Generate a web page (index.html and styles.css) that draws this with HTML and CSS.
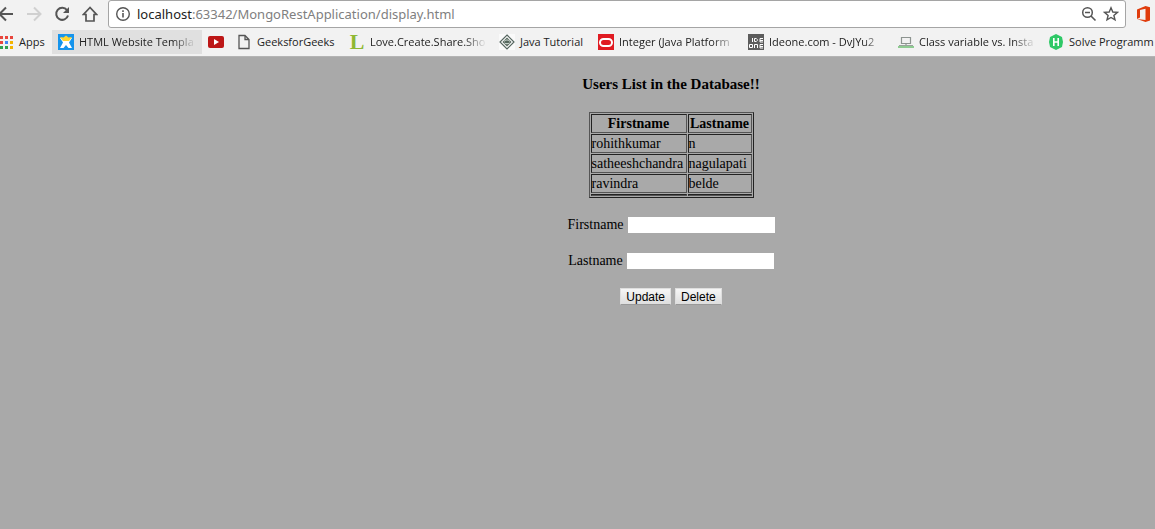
FILE: index.html
```html
<!DOCTYPE html>
<html lang="en">
<head>
<meta charset="utf-8">
<title>Users List</title>
<link rel="stylesheet" href="styles.css">
</head>
<body>
<header class="browser">
  <div class="toolbar">
    <nav class="nav" aria-label="Navigation">
      <button class="tool" aria-label="Back"><svg width="16" height="16" viewBox="0 0 16 16"><path d="M15 8H2M8 1.500L1.500 8l6.500 6.500" fill="none" stroke="#555" stroke-width="2"/></svg></button>
      <button class="tool" aria-label="Forward"><svg width="16" height="16" viewBox="0 0 16 16"><path d="M1 8h13M8 1.500L14.500 8 8 14.500" fill="none" stroke="#d0d0d0" stroke-width="2"/></svg></button>
      <button class="tool" aria-label="Reload"><svg width="16" height="16" viewBox="0 0 16 16"><path d="M13 4.200A6 6 0 1 0 14 9.500" fill="none" stroke="#555" stroke-width="2"/><path d="M15 1v6H9z" fill="#555"/></svg></button>
      <button class="tool" aria-label="Home"><svg width="16" height="16" viewBox="0 0 16 16"><path d="M8 1.500L1.500 8.500H4V15h8V8.500h2.500z" fill="none" stroke="#555" stroke-width="1.700"/></svg></button>
    </nav>
    <div class="address">
      <svg width="16" height="16" viewBox="0 0 16 16"><circle cx="8" cy="8" r="6.300" fill="none" stroke="#555" stroke-width="1.400"/><path d="M8 7v4.500M8 4.300v1.600" stroke="#555" stroke-width="1.600"/></svg>
      <div class="url"><span class="host">localhost</span>:63342/MongoRestApplication/display.html</div>
      <svg width="16" height="16" viewBox="0 0 16 16"><circle cx="6.500" cy="6.500" r="4.800" fill="none" stroke="#555" stroke-width="1.500"/><path d="M4 6.500h5M10 10l4.500 4.500" fill="none" stroke="#555" stroke-width="1.600"/></svg>
      <svg width="16" height="16" viewBox="0 0 16 16"><path d="M8 1.800l1.800 4.200 4.600.400-3.500 3 1.100 4.500L8 11.500l-4 2.400 1.100-4.500-3.500-3L6.200 6z" fill="none" stroke="#555" stroke-width="1.400"/></svg>
    </div>
    <svg class="office" width="16" height="18" viewBox="0 0 16 18"><path d="M1 4.500L9.500 1 14 2.300v13.200L9.500 17 1 14l8.500 1V3.700L4 5v7.500L1 14z" fill="#e03c0c"/></svg>
  </div>
  <nav class="bookmarks" aria-label="Bookmarks">
    <a class="mark apps" href="#"><svg width="14" height="14" viewBox="0 0 14 14"><path d="M1 1h3v3H1zM6 1h3v3H6zM11 1h3v3h-3zM1 6h3v3H1z" fill="#e8453c"/><path d="M6 6h3v3H6z" fill="#4285f4"/><path d="M11 6h3v3h-3zM11 11h3v3h-3z" fill="#f4b400"/><path d="M1 11h3v3H1zM6 11h3v3H6z" fill="#30a050"/></svg><span>Apps</span></a>
    <a class="mark wide active" href="#"><svg width="16" height="16" viewBox="0 0 16 16"><path fill="#1594ec" d="M0 0h16v16H0z"/><path d="M2 4h3l3 2 3-2h3l-3 4.500 3 5.500h-3.500L8 11l-2.500 3H2l3-5.500z" fill="#fff"/><path d="M2 3l3.500.500L8 1.500l2.500 2L14 3l-3 4H5z" fill="#ffd52e"/></svg><span class="fade">HTML Website Templa</span></a>
    <a class="mark video" href="#" aria-label="Video"><svg width="16" height="16" viewBox="0 0 16 16"><rect y="2" width="16" height="12" rx="2" fill="#bd1717"/><path d="M6 5l5 3-5 3z" fill="#fff"/></svg></a>
    <a class="mark geeks" href="#"><svg width="16" height="16" viewBox="0 0 16 16"><path d="M3 1.500h6l4 4v9H3zM9 1.500v4h4" fill="none" stroke="#555" stroke-width="1.300"/></svg><span>GeeksforGeeks</span></a>
    <a class="mark wide" href="#"><b class="letter">L</b><span class="fade">Love.Create.Share.Sho</span></a>
    <a class="mark java" href="#"><svg width="16" height="16" viewBox="0 0 16 16"><path fill="#fafafa" d="M0 0h16v16H0z"/><path d="M8 1l7 7-7 7-7-7z" fill="none" stroke="#566660" stroke-width="1.200"/><path d="M8 3.500L12.500 8 8 12.500 3.500 8z" fill="#55665c"/><path d="M5 7.500c2-2 4-2 6 0M5.500 9c2 1 3 1 5 0" fill="none" stroke="#d9e3dd"/></svg><span>Java Tutorial</span></a>
    <a class="mark wide" href="#"><svg width="16" height="16" viewBox="0 0 16 16"><path fill="#e01b22" d="M0 0h16v16H0z"/><rect x="2" y="5" width="12" height="7" rx="3.500" fill="none" stroke="#fff" stroke-width="2"/></svg><span class="fade">Integer (Java Platform</span></a>
    <a class="mark wide" href="#"><svg width="16" height="16" viewBox="0 0 16 16"><path fill="#5c5c5c" d="M0 0h16v16H0z"/><path d="M4.500 4v4M6.500 4.500v3h1.800l1-1V5.500l-1-1zM15 4.500h-3v3.500h3M12 6.500h3M1.500 10.500h3v3h-3zM6.500 14v-3.500h3V14M15 10.500h-3v3.500h3M12 12.500h3" fill="none" stroke="#fff" stroke-width="1"/></svg><span class="fade">Ideone.com - DvJYu2</span></a>
    <a class="mark wide" href="#"><svg width="16" height="16" viewBox="0 0 16 16"><path d="M3.500 3.500h9v6h-9zM8 9.500v2" fill="none" stroke="#8d9490" stroke-width="1.200"/><path d="M1 11.500h14" stroke="#9aa39d"/><path d="M0 13h16" stroke="#6cbe70" stroke-width="1.500"/></svg><span class="fade">Class variable vs. Insta</span></a>
    <a class="mark wide" href="#"><svg width="16" height="16" viewBox="0 0 16 16"><path d="M8 0l6 3 1 5-1 5-6 3-6-3-1-5 1-5z" fill="#2ec866"/><path d="M5.800 4v8M10.200 4v8M6 8h4" stroke="#fff" stroke-width="1.600"/></svg><span>Solve Programm</span></a>
  </nav>
</header>
<main class="page">
  <h1 class="title">Users List in the Database!!</h1>
  <table class="users">
    <thead><tr><th class="first">Firstname</th><th class="last">Lastname</th></tr></thead>
    <tbody>
      <tr><td>rohithkumar</td><td>n</td></tr>
      <tr><td>satheeshchandra</td><td>nagulapati</td></tr>
      <tr><td>ravindra</td><td>belde</td></tr>
      <tr><td></td><td></td></tr>
    </tbody>
  </table>
  <form class="form">
    <div class="field"><label for="firstname">Firstname</label><input id="firstname" type="text"></div>
    <div class="field"><label for="lastname">Lastname</label><input id="lastname" type="text"></div>
    <div class="actions"><button class="action" type="button">Update</button><button class="action" type="button">Delete</button></div>
  </form>
</main>
</body>
</html>
```

FILE: styles.css
```css
* { box-sizing: border-box; }
body {
  margin: 0;
  min-height: 100vh;
  background: #a9a9a9;
  color: #000;
  overflow-x: hidden;
}
.browser {
  background: #f2f2f2;
  border-bottom: 1px solid #b4b4b4;
  font: 11px/16px "Open Sans", sans-serif;
  overflow: hidden;
}
.toolbar { display: flex; align-items: center; height: 28px; }
.nav { display: flex; flex: none; gap: 12px; width: 108px; margin-left: -2px; }
.tool { display: flex; padding: 0; border: 0; background: none; }
.address {
  display: flex;
  flex: 1;
  align-items: center;
  gap: 6px;
  height: 28px;
  margin-left: 2px;
  padding: 0 6px;
  border: 1px solid #a5a5a5;
  border-radius: 3px;
  background: #fff;
}
.url { flex: 1; color: #808080; font: 13px/18px "Noto Sans", sans-serif; }
.host { color: #222; }
.office { flex: none; margin: 0 3px 0 10px; }
.bookmarks { display: flex; height: 28px; padding-top: 2px; }
.mark {
  display: flex;
  flex: none;
  align-items: center;
  gap: 5px;
  height: 24px;
  padding: 0 6px;
  color: #222;
  text-decoration: none;
  white-space: nowrap;
}
.mark svg { flex: none; }
.apps { width: 52px; padding: 0; margin-left: -1px; margin-right: 1px; gap: 6px; }
.wide { width: 150px; }
.active { background: #e0e0e0; }
.video { width: 28px; }
.geeks { width: 113px; }
.java { width: 99px; }
.fade {
  flex: 1;
  -webkit-mask-image: linear-gradient(to right, #000 80%, transparent);
  mask-image: linear-gradient(to right, #000 80%, transparent);
}
.letter { width: 16px; color: #8fb832; font: bold 22px/16px "Liberation Serif", serif; text-align: center; }
.page {
  display: flex;
  flex-direction: column;
  align-items: center;
  padding: 19px 0 0 187px;
  font: 14px/17px "Liberation Serif", serif;
}
.title { margin: 0 0 19px; font-size: 15px; }
.users {
  border: 1px solid #333;
  border-color: #555 #222 #222 #555;
  border-spacing: 1px;
}
.users th, .users td {
  padding: 0;
  border: 1px solid #333;
  border-color: #222 #555 #555 #222;
}
.first { width: 96px; }
.last { width: 64px; }
.form { display: flex; flex-direction: column; align-items: center; margin-top: 18px; }
.field { display: flex; align-items: center; gap: 4px; height: 18px; margin-bottom: 18px; }
.field label { padding-bottom: 2px; }
.field input { width: 147px; height: 16px; padding: 1px; border: 0; background: #fff; }
.actions { display: flex; gap: 4px; }
.action {
  height: 17px;
  padding: 0 5px;
  border: 1px solid #dedede;
  border-bottom-color: #999;
  background: linear-gradient(#f6f6f6, #dedede);
  color: #000;
  font: 12px/14px "Liberation Sans", sans-serif;
}
```
